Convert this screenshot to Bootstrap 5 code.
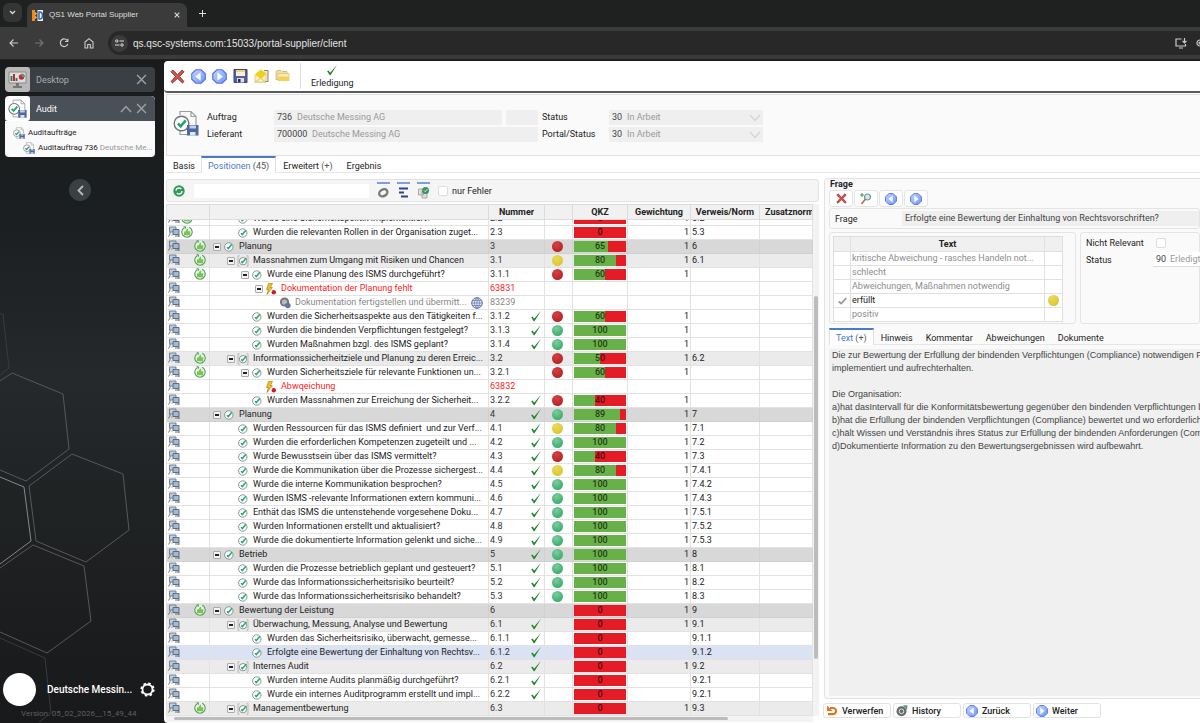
<!DOCTYPE html>
<html lang="de">
<head>
<meta charset="utf-8">
<meta name="viewport" content="width=device-width, initial-scale=1">
<title>QS1 Web Portal Supplier</title>
<link href="https://cdn.jsdelivr.net/npm/bootstrap@5.3.0/dist/css/bootstrap.min.css" rel="stylesheet">
<style>
  body { font-family: Roboto, sans-serif; font-size: 9px; line-height: 14px; color: #222; background: #1b1d1e; }
  button { color: inherit; }
  .plain { background: none; border: 0; padding: 0; line-height: 0; }
  svg { flex: none; display: block; }
  input, select, textarea { font: inherit; color: inherit; min-width: 0; }

  /* browser frame */
  .tabstrip { height: 27px; background: #1f2120; color: #dedede; }
  .tab-search { width: 19px; height: 19px; border-radius: 6px; background: #343535; margin: 3px 5px 0 3px; }
  .browser-tab { width: 160px; height: 24px; background: #3b3b3b; border-radius: 7px 7px 0 0; padding: 0 7px 0 5px; }
  .browser-tab span { font-family: "Liberation Sans", sans-serif; font-size: 8px; padding-left: 2px; }
  .addressbar { height: 33px; background: #3b3b3b; color: #d6d6d6; border-bottom: 1px solid #222; padding: 4px 0 4px 8px; }
  .addressbar .nav-icons { gap: 13px; width: 100px; }
  .url-box { height: 24px; background: #282828; border-radius: 12px 0 0 12px; padding: 0 0 0 3px; gap: 5px; }
  .site-info { width: 17px; height: 17px; border-radius: 50%; background: #3b3b3b; }
  .url-box input { background: none; border: 0; outline: 0; padding: 0; font: 10px "Liberation Sans", sans-serif; color: #e4e4e4; }
  .center-items { display: grid; place-items: center; }

  /* sidebar */
  .side { width: 164px; flex: none; background: linear-gradient(#191b1c 0, #1c1f21 25%, #25292b 48%, #1d1f20 78%, #17191a); color: #fff; padding: 7px 9px 0 5px; position: relative; overflow: hidden; }
  .side .hexes { position: absolute; left: 0; bottom: 0; }
  .side-item { height: 25px; border-radius: 4px; background: #3a3f44; color: #a9abad; overflow: hidden; }
  .side-item .name { padding-left: 6px; flex: 1; }
  .side-item button { color: #9da1a4; }
  .side-icon { width: 25px; height: 25px; background: #b9b9b9; border-radius: 3px; }
  .side-group { background: #fafafa; border-radius: 4px; margin-top: 4px; overflow: hidden; color: #222; height: 61px; }
  .side-group .side-item { background: #495057; color: #fff; border-radius: 4px 4px 0 0; }
  .side-group a { color: #222; text-decoration: none; height: 15px; gap: 3px; font-size: 8px; padding-left: 8px; }
  .side-group a.sub { padding-left: 18px; }
  .side-group a span span { color: #999; }
  .collapse-btn { width: 22px; height: 22px; border-radius: 50%; background: #3b4045; border: 0; margin: 22px auto 0; padding: 0; }
  .avatar { width: 33px; height: 33px; border-radius: 50%; background: #fff; margin-left: -2px; }
  .user-row { gap: 7px; font-size: 10px; font-weight: 500; position: relative; }
  .version { font-size: 8px; line-height: 12px; color: #5d6062; padding: 2px 0 3px 16px; position: relative; }

  /* main */
  .main-col { background: #fff; border-top-left-radius: 4px; border-bottom-left-radius: 4px; margin-top: 1px; overflow: hidden; }
  .main-tools { height: 32px; border-bottom: 2px solid #58595b; padding: 0 6px; gap: 6px; border-bottom-left-radius: 4px; }
  .main-tools .sep { width: 1px; height: 26px; background: #ddd; margin: 0 4px; }
  .main-tools .done span { line-height: 10px; padding-top: 2px; }
  .head-panel { height: 62px; background: #fafafa; border: solid #e0e0e0; border-width: 1px 0 1px 1px; margin: 1px 0 0 2px; padding: 7px 0 0 6px; }
  .head-grid { display: grid; grid-template-columns: 67px 264px 71px 154px; row-gap: 2px; padding-left: 8px; }
  .fld { background: #efefef; height: 15px; padding: 0 3px; gap: 4px; position: relative; }
  .fld input, .fld select { border: 0; background: none; padding: 0; color: #999; appearance: none; height: 14px; }
  .fld input.code { color: #444; flex: none; }
  .w-3d { width: 16px; } .w-6d { width: 31px; } .w-2d { width: 11px; } .w-extra { width: 26px; }
  .fld svg { position: absolute; right: 2px; top: 4px; pointer-events: none; color: #d4d4d4; }
  .app-tabs { border-bottom: 1px solid #e6e6e6; font-weight: 500; }
  .app-tabs button { background: none; border: 0; border-top: 2px solid transparent; padding: 0 7px; height: 17px; margin-bottom: -1px; line-height: 14px; white-space: nowrap; }
  .app-tabs button.on { color: #4a7ac8; border: solid #e0e0e0; border-width: 2px 1px 0; border-top-color: #4a7ac8; background: #fff; padding: 0 6px; }
  .app-tabs button span { color: #555; font-weight: 400; }
  .app-tabs.page { padding-left: 2px; margin-left: 2px; }
  .app-tabs.page button:first-child { padding-left: 5px; padding-right: 6px; }
  .app-tabs.question button { padding: 0 6px; }
  .app-tabs.question button + button { padding-left: 7px; }
  .split { display: grid; grid-template-columns: minmax(0, 655px) minmax(0, 1fr); padding-top: 6px; }
  .filterbar { height: 23px; background: #f5f5f5; border: 1px solid #e2e2e2; border-radius: 3px; padding: 0 6px; }
  .filterbar .search { width: 175px; height: 14px; border: 0; background: #fff; margin: 0 8px 0 9px; padding: 0 3px; }
  .filterbar .tog { border-top: 2px solid #7d9fdb; width: 13px; height: 17px; margin-right: 7px; padding: 1px 0 0; }
  .filterbar label { padding-left: 1px; }
  .tick { appearance: none; width: 10px; height: 10px; border: 1px solid #ddd; border-radius: 2px; background: #fff; margin: 0; flex: none; }
  .tick:checked { background: #4a7ac8; }

  /* tree table */
  .tree-area { display: grid; grid-template-columns: minmax(0, 1fr) 6px; grid-template-rows: minmax(0, 1fr) 6px; margin-top: 2px; }
  .tree-scroll { overflow: auto; scrollbar-width: none; }
  .tree-scroll::-webkit-scrollbar { display: none; }
  .tree { table-layout: fixed; width: 100%; border-collapse: separate; border-spacing: 0; border-left: 1px solid #e0e0e0; }
  .tree th { position: sticky; top: 0; z-index: 1; background: #f1f1f1; height: 16px; padding: 1px 1px 0; border: solid #dcdcdc; border-width: 1px 1px 1px 0; text-align: center; font-weight: 700; line-height: 13px; white-space: nowrap; overflow: hidden; color: #222; }
  .tree th:last-child { text-align: left; padding-left: 5px; }
  .tree td { height: 14px; padding: 0 1px; border: solid #e2e2e2; border-width: 0 1px 1px 0; line-height: 13px; white-space: nowrap; overflow: hidden; }
  .tree td:first-child svg { display: inline-block; vertical-align: top; }
  .tree td:first-child .near { margin-left: 1px; }
  .tree td:first-child .far { margin-left: 14px; }
  .tree .g1 td { background: #d8d8d8; border-color: #d0d0d0; }
  .tree .g2 td { background: #ebebeb; }
  .tree .sel td { background: #dae2f3; }
  .tree .err { color: #f22; } .tree .mut { color: #888; }
  .node { display: flex; align-items: center; height: 13px; }
  .node .txt { margin-left: 4px; }
  .node .box { width: 8px; height: 8px; border: 1px solid #aaa; border-radius: 1px; background: #f4f4f4; padding: 2px 1px; margin-right: 2px; flex: none; }
  .node .box.leaf { visibility: hidden; }
  .node .box i { display: block; height: 2px; background: #222; }
  .l1 { padding-left: 2px; } .l2 { padding-left: 16px; } .l3 { padding-left: 30px; } .l4 { padding-left: 44px; } .l5 { padding-left: 58px; }
  .dot { width: 11px; height: 11px; border-radius: 50%; margin: 0 auto 0 6px; }
  .dot.r { background: radial-gradient(circle at 40% 30%, #d84040, #a81c20); }
  .dot.y { background: radial-gradient(circle at 40% 30%, #ecd856, #d4c228); }
  .dot.g { background: radial-gradient(circle at 40% 30%, #7fcca0, #22a35c); }
  .qkz { height: 11px; background: #e31c26; position: relative; text-align: center; line-height: 11px; color: rgba(0, 0, 0, .7); }
  .qkz i { position: absolute; left: 0; top: 0; bottom: 0; background: #67b148; }
  .qkz b { position: relative; font-weight: 500; }
  .num { display: flex; justify-content: space-between; padding-right: 1px; height: 13px; color: #333; }
  .err .num, .mut .num { color: inherit; }
  .vbar, .hbar { background: #f3f3f3; display: flex; }
  .vbar { flex-direction: column; padding: 92px 1px 57px; }
  .vbar i { flex: 1; background: #bcbcbc; border-radius: 2px; }
  .hbar { padding: 1px 85px 2px 8px; }
  .hbar i { flex: 1; background: #bcbcbc; border-radius: 2px; }
  .list-side { padding-left: 2px; padding-bottom: 1px; }

  /* question panel */
  .q-side { padding-left: 5px; margin-top: -1px; }
  .q-panel { border: solid #e2e2e2; border-width: 1px 0 1px 1px; border-radius: 4px 0 0 4px; background: #fafafa; padding-left: 4px; }
  .q-title { padding-left: 1px; line-height: 11px; }
  .q-btn { width: 24px; height: 17px; background: #fff; border: 1px solid #e4e4e4; border-radius: 3px; display: grid; place-items: center; padding: 0; }
  .q-btns { gap: 1px; margin-bottom: 1px; }
  .boxed { border: 1px solid #e4e4e4; border-radius: 3px; flex: none; }
  .q-name { height: 21px; padding-left: 5px; }
  .q-name label { width: 67px; }
  .q-name .fld input { color: #444; }
  .q-boxes { margin-top: 3px; }
  .rate-box { width: 247px; height: 92px; padding: 3px; }
  .state-box { padding: 3px 0 0 5px; min-width: 0; }
  .state-box label { width: 67px; flex: none; }
  .state-box .tick { margin-left: 3px; }
  .state-box .row2 { margin-top: 2px; }
  .state-box .fld { gap: 3px; background: #fff; border-bottom: 1px solid #ddd; }
  .rating { table-layout: fixed; width: 230px; border-collapse: separate; border-spacing: 0; border-left: 1px solid #ddd; border-top: 1px solid #ddd; }
  .rating th, .rating td { border: solid #e0e0e0; border-width: 0 1px 1px 0; height: 14px; line-height: 13px; padding: 0 1px; white-space: nowrap; overflow: hidden; color: #8c8c8c; background: #fff; }
  .rating th { background: #f0f0f0; color: #222; height: 15px; text-align: center; }
  .rating .on td { color: #222; }
  .rating .dot { margin-left: 2px; }
  .q-text { background: #f0f0f0; border: 0; resize: none; outline: 0; font: 9px/13px "Liberation Sans", sans-serif; color: #444; white-space: pre; overflow: hidden; padding: 0 3px; margin: 4px 0 2px; }
  .foot { padding: 4px 0 5px; gap: 2px; margin-left: -1px; }
  .foot-btn { width: 68px; height: 15px; border: 1px solid #e2e2e2; border-radius: 3px; background: #fff; display: flex; align-items: center; gap: 4px; padding: 0 2px; font-weight: 500; }
</style>
</head>
<body class="vh-100 d-flex flex-column overflow-hidden">

<svg width="0" height="0" class="position-absolute" aria-hidden="true">
  <defs>
    <linearGradient id="blueG" x1="0" y1="0" x2="1" y2="1"><stop offset="0" stop-color="#c3d6ff"/><stop offset="1" stop-color="#6f97fa"/></linearGradient>
    <symbol id="i-x" viewBox="0 0 10 10"><path d="M1 1l8 8M9 1l-8 8" fill="none" stroke="currentColor" stroke-width="1.300"/></symbol>
    <symbol id="i-redx" viewBox="0 0 14 14"><path d="M2.600 1L7 5.300 11.400 1 13 2.600 8.800 7l4.200 4.700-1.400 1.300L7 8.700 2.400 13 1 11.700 5.200 7 1 2.600z" fill="#e2553c" stroke="#6e3040" stroke-width=".9"/></symbol>
    <symbol id="i-prev" viewBox="0 0 14 14"><path d="M4.500.7h5l3.800 3.800v5l-3.800 3.800h-5L.7 9.500v-5z" fill="url(#blueG)" stroke="#5570e8" stroke-width="1.100"/><path d="M9 3v8L4 7z" fill="#fff"/></symbol>
    <symbol id="i-next" viewBox="0 0 14 14"><path d="M4.500.7h5l3.800 3.800v5l-3.800 3.800h-5L.7 9.500v-5z" fill="url(#blueG)" stroke="#5570e8" stroke-width="1.100"/><path d="M5 3v8l5-4z" fill="#fff"/></symbol>
    <symbol id="i-save" viewBox="0 0 14 14"><path d="M.5.500h13v13h-13z" fill="#595f9c" stroke="#3d4378"/><path d="M2.500 1h9v6h-9z" fill="#f8f1d6"/><path d="M2.500 2h9" stroke="#ecc95a" stroke-width="1.500"/><path d="M3.500 9h7v4.500h-7z" fill="#dcdde4"/><path d="M4.500 10h2.500v3.500H4.500z" fill="#2a2f55"/></symbol>
    <symbol id="i-mail" viewBox="0 0 15 14"><path d="M10 1.500h4v11H9" fill="#f3ead0" stroke="#85775a" stroke-width=".9"/><path d="M1 6.500l5.500-5.500L12 6v7H1z" fill="#ffeeb0" stroke="#d8b85a" stroke-width=".6"/><path d="M1 5.500L7 .5l5.500 4-5.500 5.500z" fill="#ecd21c"/><path d="M1 13l5.500-3.500L12 13z" fill="#fdf3c4" stroke="#c8a94c" stroke-width=".6"/></symbol>
    <symbol id="i-folder" viewBox="0 0 15 14"><path d="M1 2.500l1-1h4l1 1h5v8H1z" fill="#f3dfa0" stroke="#c9b27a" stroke-width=".8"/><path d="M3 4.500h11v7H3z" fill="#fdeeb4" stroke="#dcb860" stroke-width=".7"/><path d="M3.500 7.500H14V12H3z" fill="#f5cd5c"/></symbol>
    <symbol id="i-check" viewBox="0 0 12 12"><path d="M1.200 7.200l1.300-.7 1.600 2.300L11 .8 4.500 11.200h-.7z" fill="#1c8428"/></symbol>
    <symbol id="i-audit" viewBox="0 0 26 26"><path d="M7 5V1.500h11l5 5V16M18 1.500v5h5M7 21v3.500h7" fill="none" stroke="#9a9ea1" stroke-width="1.200"/><circle cx="8.500" cy="13.500" r="7.300" fill="#fff" stroke="#6d7477" stroke-width="1.400"/><path d="M5 13.500l2.700 2.800 5-6" fill="none" stroke="#25a567" stroke-width="2.600"/><path d="M14 15h11.500v10.500H14z" fill="#4c66a0"/><path d="M16.500 15.500h6.500v3h-6.500z" fill="#c6d2e8"/><path d="M17 22h5.500v3.500H17z" fill="#dfe5f0"/></symbol>
    <symbol id="i-q" viewBox="0 0 12 12"><circle cx="5.800" cy="6" r="4.200" fill="#fff" stroke="#81888a" stroke-width=".9"/><path d="M4 6.200l1.300 1.300 3.600-4.200" fill="none" stroke="#28aa78" stroke-width="1.600"/></symbol>
    <symbol id="i-qb" viewBox="0 0 12 12"><path d="M2.500 .8H1v10.400h1.500M9.500 .8H11v10.400H9.500" fill="none" stroke="#aaa" stroke-width=".8"/><circle cx="6" cy="6.200" r="3.700" fill="#fff" stroke="#81888a" stroke-width=".9"/><path d="M4.200 6.400l1.200 1.200 4-4.700" fill="none" stroke="#28aa78" stroke-width="1.500"/></symbol>
    <symbol id="i-find" viewBox="0 0 12 12"><path d="M1.500 1h6.500v5H1.500z" fill="#b9cfe6" stroke="#6e767e" stroke-width=".9"/><path d="M5 3.500h6v5H5z" fill="#9dbbdc" stroke="#59616a" stroke-width=".9"/><path d="M2 6v2L.5 10.500M4 8.500v1M11 8.500V11M7 10h4" stroke="#59616a" fill="none" stroke-width=".9"/></symbol>
    <symbol id="i-thumb" viewBox="0 0 12 12"><circle cx="6" cy="6" r="5.200" fill="#e9f5e4"/><path d="M8.200 1.300A5.200 5.200 0 113.600 1.400" fill="none" stroke="#4f9f5c" stroke-width="1.100"/><path d="M2.500 .8h2v1.800" fill="none" stroke="#4f9f5c"/><path d="M3 5.600h1.500L6 2.800l1.200.3-.2 2.200h2.400L9 9.200H3z" fill="#7cc250"/></symbol>
    <symbol id="i-flash" viewBox="0 0 12 12"><path d="M3.500.5h4L5.300 4.500h2L2 11.500l1.300-5H1.500z" fill="#f3c21c" stroke="#9a7410" stroke-width=".6"/><circle cx="8.800" cy="9.300" r="2.200" fill="#c8202a"/></symbol>
    <symbol id="i-gear" viewBox="0 0 12 12"><ellipse cx="5.800" cy="6.300" rx="4" ry="3" transform="rotate(-30 5.800 6.300)" fill="none" stroke="#7d7878" stroke-width="2.200"/></symbol>
    <symbol id="i-gearblue" viewBox="0 0 12 12"><circle cx="5.500" cy="5" r="3.600" fill="#bbb" stroke="#77777a" stroke-width="2"/><circle cx="8.800" cy="8.500" r="2.800" fill="#6176a8"/></symbol>
    <symbol id="i-globe" viewBox="0 0 12 12"><circle cx="6" cy="6" r="5.300" fill="#e4ebf8" stroke="#4b5f96" stroke-width=".9"/><path d="M.7 6h10.600M6 .7v10.600M1.500 3.500h9M1.500 8.500h9M6 .7C2.500 3.500 2.500 8.500 6 11.300 9.500 8.500 9.500 3.500 6 .7" fill="none" stroke="#6376a8" stroke-width=".7"/></symbol>
    <symbol id="i-down" viewBox="0 0 12 8"><path d="M1 1l5 5.500L11 1" fill="none" stroke="currentColor" stroke-width="1.300"/></symbol>
  </defs>
</svg>

<header>
  <div class="tabstrip d-flex">
    <button class="plain tab-search center-items" aria-label="Tabs durchsuchen"><svg width="7" height="5" viewBox="0 0 7 5"><path d="M1 1l2.500 2.500L6 1" fill="none" stroke="#ddd" stroke-width="1.300"/></svg></button>
    <div class="browser-tab d-flex align-items-center mt-auto gap-1">
      <svg width="11" height="11" viewBox="0 0 11 11"><path d="M0 0h3v11H0z" fill="#f08a1c"/><path d="M3 2l2 1.500L3 5.500 5 7.500 3 9" fill="#f8b46a"/><path d="M5.500 0H11v11H5.500z" fill="#f4f7fb"/><path d="M7 2h1a2.500 3.500 0 010 7H7z" fill="none" stroke="#2b64b0" stroke-width="1.500"/></svg>
      <span class="flex-grow-1">QS1 Web Portal Supplier</span>
      <button class="plain" aria-label="Tab schließen"><svg width="6" height="6" viewBox="0 0 6 6"><path d="M.7.700l4.600 4.600M5.300.700L.7 5.300" stroke="#ddd" stroke-width="1.100"/></svg></button>
    </div>
    <button class="plain ms-2 px-1" aria-label="Neuer Tab"><svg width="7" height="7" viewBox="0 0 7 7"><path d="M3.500 0v7M0 3.500h7" stroke="#ddd" fill="none"/></svg></button>
  </div>
  <div class="addressbar d-flex">
    <div class="nav-icons d-flex align-items-center">
      <button class="plain" aria-label="Zurück"><svg width="12" height="10" viewBox="0 0 12 10" fill="none" stroke="#ccc" stroke-width="1.100"><path d="M10 5H2M5.500 1.500L2 5l3.500 3.500"/></svg></button>
      <button class="plain" aria-label="Vorwärts"><svg width="12" height="10" viewBox="0 0 12 10" fill="none" stroke="#777" stroke-width="1.100"><path d="M2 5h8M6.500 1.500L10 5 6.500 8.500"/></svg></button>
      <button class="plain" aria-label="Neu laden"><svg width="12" height="12" viewBox="0 0 12 12" fill="none" stroke="#ccc" stroke-width="1.200"><path d="M9.500 4A3.800 3.800 0 109.800 6.800M9.800 1.800V4.500H7"/></svg></button>
      <button class="plain" aria-label="Startseite"><svg width="12" height="12" viewBox="0 0 12 12" fill="none" stroke="#ccc" stroke-width="1.100"><path d="M2 5l4-3.300L10 5v6H7.300V7.500H4.700V11H2z"/></svg></button>
    </div>
    <div class="url-box d-flex align-items-center flex-grow-1">
      <span class="site-info center-items"><svg width="9" height="8" viewBox="0 0 9 8" fill="none" stroke="#ddd"><circle cx="1.800" cy="2" r="1.200"/><path d="M4.500 2H9M0 6h4.500"/><circle cx="7" cy="6" r="1.200"/></svg></span>
      <input class="flex-grow-1" aria-label="Adresse" value="qs.qsc-systems.com:15033/portal-supplier/client">
      <svg width="12" height="11" viewBox="0 0 12 11" fill="none" stroke="#ccc" stroke-width="1.200"><path d="M6.500 1H1v7h9.500V6M4 10h4M9.500 0v4.500M7.500 2.800l2 2 2-2"/></svg>
      <svg class="ms-1" width="4" height="8" viewBox="0 0 4 8" fill="none" stroke="#ccc" stroke-width="1.200"><circle cx="4" cy="4" r="3"/><circle cx="4" cy="4" r="1"/></svg>
    </div>
  </div>
</header>

<div class="d-flex flex-grow-1 overflow-hidden">
  <nav class="side d-flex flex-column">
    <svg class="hexes" width="140" height="423" viewBox="0 0 140 423" fill="none" stroke="#56595b" stroke-width="1"><path d="M0 14h3l6 54-9 7" stroke="#383c3e"/><path d="M0 81l12-8 51 21 6 55-43 32-26-11M72 154l51 20 6 56-43 32-50-21-7-55zM0 268l33-23 51 21 7 55-44 32-47-21"/><path d="M0 177l24 10 7 54-31 23" stroke="#85888a"/><path d="M0 338l45 20 6 55-12 9" stroke="#383c3e"/></svg>
    <div class="side-item d-flex align-items-center">
      <span class="side-icon center-items"><svg width="19" height="19" viewBox="0 0 19 19"><path d="M1 2h17v11H1z" fill="#ddd" stroke="#888"/><path d="M3.500 6v5M8.500 8v3" stroke="#287c48" stroke-width="1.800"/><path d="M6 4v7" stroke="#c3283c" stroke-width="2"/><circle cx="13.500" cy="7" r="2.700" fill="#c3283c"/><path d="M13.500 7V3.500a3.500 3.500 0 013.500 3.500z" fill="#529e54"/><path d="M8 13h3v3h3v2H5v-2h3z" fill="#777"/></svg></span>
      <span class="name">Desktop</span>
      <button class="plain me-1 pe-1" aria-label="Desktop schließen"><svg width="11" height="11"><use href="#i-x"/></svg></button>
    </div>
    <div class="side-group">
      <div class="side-item d-flex align-items-center">
        <span class="side-icon bg-white center-items"><svg width="19" height="19"><use href="#i-audit"/></svg></span>
        <span class="name">Audit</span>
        <button class="plain" aria-label="Einklappen"><svg width="12" height="8" viewBox="0 0 12 8"><path d="M1 7l5-5.500L11 7" fill="none" stroke="#9da1a4" stroke-width="1.500"/></svg></button>
        <button class="plain me-1 pe-1 ms-1" aria-label="Audit schließen"><svg width="11" height="11"><use href="#i-x"/></svg></button>
      </div>
      <a href="#" class="d-flex align-items-center mt-1"><svg width="12" height="12"><use href="#i-audit"/></svg><span>Auditaufträge</span></a>
      <a href="#" class="d-flex align-items-center sub"><svg width="12" height="12"><use href="#i-audit"/></svg><span class="text-nowrap">Auditauftrag 736 <span>Deutsche Me...</span></span></a>
    </div>
    <button class="collapse-btn center-items" aria-label="Menü einklappen"><svg width="7" height="11" viewBox="0 0 7 11"><path d="M6 1L1.500 5.500 6 10" fill="none" stroke="#bbb" stroke-width="1.800"/></svg></button>
    <div class="user-row d-flex align-items-center mt-auto">
      <span class="avatar flex-shrink-0"></span>
      <span class="text-nowrap flex-grow-1 ps-1">Deutsche Messin...</span>
      <button class="plain" aria-label="Einstellungen"><svg width="15" height="15" viewBox="0 0 15 15"><circle cx="7.500" cy="7.500" r="5" fill="none" stroke="#fff" stroke-width="1.800"/><circle cx="7.500" cy="7.500" r="6.300" fill="none" stroke="#fff" stroke-width="1.600" stroke-dasharray="2.500 2.450"/></svg></button>
    </div>
    <div class="version">Version: 05_02_2026__15_49_44</div>
  </nav>

  <main class="main-col d-flex flex-column flex-grow-1">
    <div class="main-tools d-flex align-items-center flex-shrink-0">
      <button class="plain" aria-label="Schließen"><svg width="15" height="15"><use href="#i-redx"/></svg></button>
      <button class="plain" aria-label="Zurück"><svg width="15" height="15"><use href="#i-prev"/></svg></button>
      <button class="plain" aria-label="Weiter"><svg width="15" height="15"><use href="#i-next"/></svg></button>
      <button class="plain" aria-label="Speichern"><svg width="15" height="14"><use href="#i-save"/></svg></button>
      <button class="plain" aria-label="Senden"><svg width="15" height="14"><use href="#i-mail"/></svg></button>
      <button class="plain" aria-label="Öffnen"><svg width="15" height="14"><use href="#i-folder"/></svg></button>
      <span class="sep"></span>
      <button class="plain done d-flex flex-column align-items-center"><svg width="14" height="12"><use href="#i-check"/></svg><span>Erledigung</span></button>
    </div>

    <section class="head-panel d-flex align-items-start flex-shrink-0">
      <svg width="26" height="26" class="mt-2"><use href="#i-audit"/></svg>
      <div class="head-grid mt-2">
        <label for="f-auftrag">Auftrag</label>
        <div class="d-flex gap-1"><div class="fld d-flex flex-grow-1"><input id="f-auftrag" class="code w-3d" value="736" readonly><input class="flex-grow-1" aria-label="Auftrag Name" value="Deutsche Messing AG" readonly></div><div class="fld"><input class="w-extra" aria-label="Auftrag Zusatz" readonly></div></div>
        <label for="f-status" class="ps-1">Status</label>
        <div class="fld d-flex"><input class="code w-2d" aria-label="Status Nummer" value="30" readonly><select id="f-status" class="flex-grow-1"><option>In Arbeit</option></select><svg width="12" height="8"><use href="#i-down"/></svg></div>
        <label for="f-lief">Lieferant</label>
        <div class="fld d-flex"><input id="f-lief" class="code w-6d" value="700000" readonly><input class="flex-grow-1" aria-label="Lieferant Name" value="Deutsche Messing AG" readonly></div>
        <label for="f-portal" class="ps-1">Portal/Status</label>
        <div class="fld d-flex"><input class="code w-2d" aria-label="Portalstatus Nummer" value="30" readonly><select id="f-portal" class="flex-grow-1"><option>In Arbeit</option></select><svg width="12" height="8"><use href="#i-down"/></svg></div>
      </div>
    </section>

    <div class="app-tabs page d-flex flex-shrink-0">
      <button>Basis</button><button class="on">Positionen <span>(45)</span></button><button>Erweitert <span>(+)</span></button><button>Ergebnis</button>
    </div>

    <div class="split flex-grow-1 overflow-hidden">
      <section class="list-side d-flex flex-column overflow-hidden">
        <div class="filterbar d-flex align-items-center flex-shrink-0">
          <button class="plain" aria-label="Aktualisieren"><svg width="12" height="12" viewBox="0 0 12 12"><circle cx="6" cy="6" r="5.700" fill="#2f9a57"/><circle cx="6" cy="6" r="3" fill="none" stroke="#eaf7ee" stroke-width="1.400" stroke-dasharray="7 2.400"/></svg></button>
          <input class="search" aria-label="Suche">
          <button class="plain tog" aria-label="Einstellungen"><svg width="13" height="13"><use href="#i-gear"/></svg></button>
          <button class="plain tog" aria-label="Sortierung"><svg width="13" height="13" viewBox="0 0 13 13"><path d="M2 2.500h9M2 6.500h5M4 10.500h7" stroke="#2d4590" stroke-width="1.900"/></svg></button>
          <button class="plain tog" aria-label="Auswahl"><svg width="13" height="13" viewBox="0 0 13 13"><path d="M1.500 3h5v6h-5zM5 5h5v7H5z" fill="#ddd" stroke="#aaa"/><circle cx="8.500" cy="4.500" r="3.500" fill="#3f9062"/><path d="M7 4.500l1.200 1.300L10.500 3" fill="none" stroke="#cfe8da"/></svg></button>
          <label class="d-flex align-items-center gap-1"><input type="checkbox" class="tick"> nur Fehler</label>
        </div>
        <div class="tree-area flex-grow-1 overflow-hidden">
          <div class="tree-scroll" id="scroller">
            <table class="tree">
              <colgroup><col style="width:43px"><col><col style="width:56px"><col style="width:28px"><col style="width:55px"><col style="width:63px"><col style="width:69px"><col style="width:53px"></colgroup>
              <thead><tr><th></th><th></th><th>Nummer</th><th></th><th>QKZ</th><th>Gewichtung</th><th>Verweis/Norm</th><th>Zusatznorm</th></tr></thead>
              <tbody id="rows"></tbody>
            </table>
          </div>
          <div class="vbar"><i></i></div>
          <div class="hbar"><i></i></div>
        </div>
      </section>

      <section class="q-side d-flex flex-column overflow-hidden">
        <div class="q-panel d-flex flex-column flex-grow-1 overflow-hidden">
          <strong class="q-title">Frage</strong>
          <div class="q-btns d-flex">
            <button class="q-btn" aria-label="Löschen"><svg width="11" height="11"><use href="#i-redx"/></svg></button>
            <button class="q-btn" aria-label="Suchen"><svg width="12" height="12" viewBox="0 0 12 12"><circle cx="7.500" cy="4" r="3" fill="#d5e8ec" stroke="#6d999e" stroke-width="1.200"/><path d="M5.300 6.300L1.500 11" stroke="#bc7a3c" stroke-width="1.800"/><path d="M2 0v4M0 2h4" stroke="#45a35c" stroke-width="1.200"/></svg></button>
            <button class="q-btn" aria-label="Vorherige"><svg width="12" height="12"><use href="#i-prev"/></svg></button>
            <button class="q-btn" aria-label="Nächste"><svg width="12" height="12"><use href="#i-next"/></svg></button>
          </div>
          <div class="boxed q-name d-flex align-items-center">
            <label for="f-frage">Frage</label>
            <div class="fld flex-grow-1"><input id="f-frage" class="w-100" value="Erfolgte eine Bewertung der Einhaltung von Rechtsvorschriften?" readonly></div>
          </div>
          <div class="q-boxes d-flex gap-1">
            <div class="boxed rate-box">
              <table class="rating">
                <colgroup><col style="width:17px"><col><col style="width:18px"></colgroup>
                <thead><tr><th></th><th>Text</th><th></th></tr></thead>
                <tbody>
                  <tr><td></td><td>kritische Abweichung - rasches Handeln not...</td><td></td></tr>
                  <tr><td></td><td>schlecht</td><td></td></tr>
                  <tr><td></td><td>Abweichungen, Maßnahmen notwendig</td><td></td></tr>
                  <tr class="on"><td><svg class="mx-auto" width="9" height="8" viewBox="0 0 9 8"><path d="M.7 4.500l2.500 2L8.300 1" fill="none" stroke="#999" stroke-width="1.800"/></svg></td><td>erfüllt</td><td><div class="dot y"></div></td></tr>
                  <tr><td></td><td>positiv</td><td></td></tr>
                </tbody>
              </table>
            </div>
            <div class="boxed state-box flex-fill">
              <div class="d-flex align-items-center"><label for="f-nr">Nicht Relevant</label><input id="f-nr" type="checkbox" class="tick"></div>
              <div class="row2 d-flex align-items-center"><label for="f-st2">Status</label><div class="fld d-flex flex-grow-1"><input id="f-st2" class="code w-2d" value="90" readonly><input class="flex-grow-1" aria-label="Status Text" value="Erledigt" readonly></div></div>
            </div>
          </div>
          <div class="app-tabs question d-flex flex-shrink-0 mt-1">
            <button class="on">Text <span>(+)</span></button><button>Hinweis</button><button>Kommentar</button><button>Abweichungen</button><button>Dokumente</button>
          </div>
          <textarea class="q-text flex-grow-1" readonly aria-label="Text">Die zur Bewertung der Erfüllung der bindenden Verpflichtungen (Compliance) notwendigen Prozesse sind
implementiert und aufrechterhalten.

Die Organisation:
a)hat dasIntervall für die Konformitätsbewertung gegenüber den bindenden Verpflichtungen bestimmt
b)hat die Erfüllung der bindenden Verpflichtungen (Compliance) bewertet und wo erforderlich
c)hält Wissen und Verständnis ihres Status zur Erfüllung der bindenden Anforderungen (Compliance)
d)Dokumentierte Information zu den Bewertungsergebnissen wird aufbewahrt.</textarea>
        </div>
        <div class="foot d-flex flex-shrink-0">
          <button class="foot-btn"><svg width="12" height="12" viewBox="0 0 12 12"><path d="M4 3h3a3.100 3.100 0 010 6.200H2" fill="none" stroke="#e6731f" stroke-width="2.200"/><path d="M1 .5v5.500h5.500z" fill="#e6731f"/></svg>Verwerfen</button>
          <button class="foot-btn"><svg width="12" height="12" viewBox="0 0 12 12"><circle cx="5.500" cy="6.300" r="5" fill="#666c69"/><circle cx="5.500" cy="6.300" r="2.300" fill="none" stroke="#e8e8e8"/><path d="M7 0l4.500.5L11 5z" fill="#4e9b7c"/></svg>History</button>
          <button class="foot-btn"><svg width="12" height="12"><use href="#i-prev"/></svg>Zurück</button>
          <button class="foot-btn"><svg width="12" height="12"><use href="#i-next"/></svg>Weiter</button>
        </div>
      </section>
    </div>
  </main>
</div>

<script>
  // level, toggle, icon, text, number, check, dot, qkz, weight, norm, thumb, row class
  const data = [
    [2,0,'q','Wurde eine Sicherheitspolitik implementiert?','2.2',0,'',0,1,'5.2','near',''],
    [2,0,'q','Wurden die relevanten Rollen in der Organisation zuget...','2.3',0,'',0,1,'5.3','near',''],
    [1,1,'q','Planung','3',0,'r',65,1,'6','far','g1'],
    [2,1,'qb','Massnahmen zum Umgang mit Risiken und Chancen','3.1',0,'y',80,1,'6.1','far','g2'],
    [3,1,'q','Wurde eine Planung des ISMS durchgeführt?','3.1.1',0,'r',60,1,'','far',''],
    [4,1,'flash','Dokumentation der Planung fehlt','63831',0,'',null,'','','','err'],
    [5,0,'gearblue','Dokumentation fertigstellen und übermitt...','83239',0,'',null,'','','','mut'],
    [3,0,'q','Wurden die Sicherheitsaspekte aus den Tätigkeiten f...','3.1.2',1,'r',60,1,'','',''],
    [3,0,'q','Wurden die bindenden Verpflichtungen festgelegt?','3.1.3',1,'g',100,1,'','',''],
    [3,0,'q','Wurden Maßnahmen bzgl. des ISMS geplant?','3.1.4',1,'g',100,1,'','',''],
    [2,1,'qb','Informationssicherheitziele und Planung zu deren Erreic...','3.2',0,'r',50,1,'6.2','far','g2'],
    [3,1,'q','Wurden Sicherheitsziele für relevante Funktionen un...','3.2.1',0,'r',60,1,'','far',''],
    [4,0,'flash','Abwqeichung','63832',0,'',null,'','','','err'],
    [3,0,'q','Wurden Massnahmen zur Erreichung der Sicherheit...','3.2.2',1,'r',40,1,'','',''],
    [1,1,'q','Planung','4',1,'g',89,1,'7','','g1'],
    [2,0,'q','Wurden Ressourcen für das ISMS definiert&nbsp; und zur Verf...','4.1',1,'y',80,1,'7.1','',''],
    [2,0,'q','Wurden die erforderlichen Kompetenzen zugeteilt und ...','4.2',1,'g',100,1,'7.2','',''],
    [2,0,'q','Wurde Bewusstsein über das ISMS vermittelt?','4.3',1,'r',40,1,'7.3','',''],
    [2,0,'q','Wurde die Kommunikation über die Prozesse sichergest...','4.4',1,'y',80,1,'7.4.1','',''],
    [2,0,'q','Wurde die interne Kommunikation besprochen?','4.5',1,'g',100,1,'7.4.2','',''],
    [2,0,'q','Wurden ISMS -relevante Informationen extern kommuni...','4.6',1,'g',100,1,'7.4.3','',''],
    [2,0,'q','Enthät das ISMS die untenstehende vorgesehene Doku...','4.7',1,'g',100,1,'7.5.1','',''],
    [2,0,'q','Wurden Informationen erstellt und aktualisiert?','4.8',1,'g',100,1,'7.5.2','',''],
    [2,0,'q','Wurde die dokumentierte Information gelenkt und siche...','4.9',1,'g',100,1,'7.5.3','',''],
    [1,1,'q','Betrieb','5',1,'g',100,1,'8','','g1'],
    [2,0,'q','Wurden die Prozesse betrieblich geplant und gesteuert?','5.1',1,'g',100,1,'8.1','',''],
    [2,0,'q','Wurde das Informationssicherheitsrisiko beurteilt?','5.2',1,'g',100,1,'8.2','',''],
    [2,0,'q','Wurde das Informationssicherheitsrisiko behandelt?','5.3',1,'g',100,1,'8.3','',''],
    [1,1,'q','Bewertung der Leistung','6',0,'',0,1,'9','far','g1'],
    [2,1,'qb','Überwachung, Messung, Analyse und Bewertung','6.1',1,'',0,1,'9.1','','g2'],
    [3,0,'q','Wurden das Sicherheitsrisiko, überwacht, gemesse...','6.1.1',1,'',0,'','9.1.1','',''],
    [3,0,'q','Erfolgte eine Bewertung der Einhaltung von Rechtsv...','6.1.2',1,'',0,'','9.1.2','','sel'],
    [2,1,'qb','Internes Audit','6.2',1,'',0,1,'9.2','','g2'],
    [3,0,'q','Wurden interne Audits planmäßig durchgeführt?','6.2.1',1,'',0,'','9.2.1','',''],
    [3,0,'q','Wurde ein internes Auditprogramm erstellt und impl...','6.2.2',1,'',0,'','9.2.1','',''],
    [2,1,'qb','Managementbewertung','6.3',0,'',0,1,'9.3','far','g2']
  ];
  const icon = (id, cls = '') => `<svg class="${cls}" width="12" height="12"><use href="#i-${id}"/></svg>`;
  document.getElementById('rows').innerHTML = data.map(([l, t, ic, txt, nr, ok, dot, q, w, norm, th, cls]) => `
    <tr class="${cls}">
      <td>${icon('find')}${th ? icon('thumb', th) : ''}</td>
      <td><div class="node l${l}"><span class="box ${t ? '' : 'leaf'}"><i></i></span>${icon(ic)}<span class="txt">${txt}</span>${ic === 'gearblue' ? icon('globe', 'ms-1') : ''}</div></td>
      <td><div class="num">${nr}${ok ? icon('check') : ''}</div></td>
      <td>${dot ? `<div class="dot ${dot}"></div>` : ''}</td>
      <td>${q === null ? '' : `<div class="qkz"><i style="width:${q}%"></i><b>${q}</b></div>`}</td>
      <td class="text-end">${w}</td><td>${norm}</td><td></td>
    </tr>`).join('');
  document.getElementById('scroller').scrollTop = 9;
</script>
<script src="https://cdn.jsdelivr.net/npm/bootstrap@5.3.0/dist/js/bootstrap.bundle.min.js"></script>
</body>
</html>
